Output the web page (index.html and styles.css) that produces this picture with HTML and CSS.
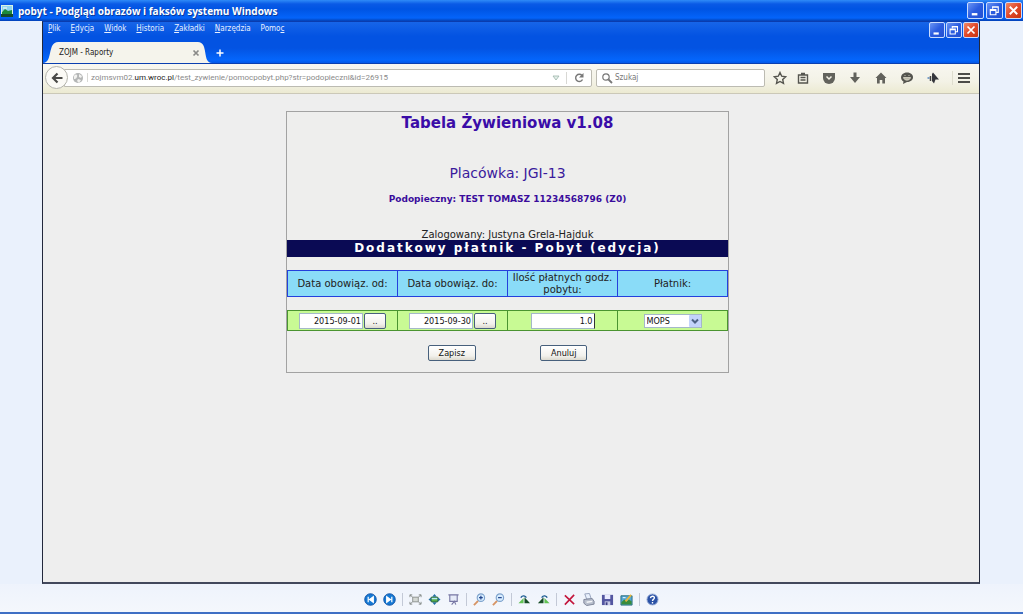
FILE: index.html
```html
<!DOCTYPE html>
<html lang="pl">
<head>
<meta charset="utf-8">
<title>pobyt - Podgląd obrazów i faksów systemu Windows</title>
<link rel="stylesheet" href="styles.css">
</head>
<body>
<header class="titlebar">
  <svg class="app-icon" viewBox="0 0 12 12"><rect width="12" height="12" fill="#d8f4e4"/><rect x="1" y="1" width="10" height="5" fill="#8fd4ee"/><path d="M1 7 4 4l3 2 4-1v4H1z" fill="#1c8a3c"/><path d="M0 9h12v3H0z" fill="#174a2c"/><path d="M2 3h4" stroke="#fff"/></svg>
  <h1 class="window-title">pobyt - Podgląd obrazów i faksów systemu Windows</h1>
  <div class="window-buttons window-buttons-outer">
    <button class="win" aria-label="Minimalizuj"><svg viewBox="0 0 16 16"><path d="M4 12h6" stroke="#fff" stroke-width="2.5"/></svg></button>
    <button class="win" aria-label="Przywróć"><svg viewBox="0 0 16 16"><path d="M6 6V4h6v6h-2M6 4.5h6M3.500 7h6v5.500h-6zM3.500 7.800h6" fill="none" stroke="#fff" stroke-width="1.200"/></svg></button>
    <button class="win close" aria-label="Zamknij"><svg viewBox="0 0 16 16"><path d="m4 4 8 8m0-8-8 8" stroke="#fff" stroke-width="2"/></svg></button>
  </div>
</header>

<main class="stage">
  <section class="browser">
    <div class="browser-top">
      <div class="menu-row">
        <nav class="menu">
          <button><u>P</u>lik</button><button><u>E</u>dycja</button><button><u>W</u>idok</button><button><u>H</u>istoria</button><button><u>Z</u>akładki</button><button><u>N</u>arzędzia</button><button>Pomo<u>c</u></button>
        </nav>
        <div class="window-buttons">
          <button class="win" aria-label="Minimalizuj przeglądarkę"><svg viewBox="0 0 16 16"><path d="M4 12h6" stroke="#fff" stroke-width="2.500"/></svg></button>
          <button class="win" aria-label="Przywróć przeglądarkę"><svg viewBox="0 0 16 16"><path d="M6 6V4h6v6h-2M6 4.500h6M3.500 7h6v5.500h-6zM3.500 7.800h6" fill="none" stroke="#fff" stroke-width="1.200"/></svg></button>
          <button class="win close" aria-label="Zamknij przeglądarkę"><svg viewBox="0 0 16 16"><path d="m4 4 8 8m0-8-8 8" stroke="#fff" stroke-width="2"/></svg></button>
        </div>
      </div>
      <div class="tabs">
        <div class="tab">
          <svg class="tab-shape" viewBox="0 0 167 21" preserveAspectRatio="none"><path d="M0 21C10 21 4 0 15 0H153C164 0 157 21 167 21z" fill="#f5f4ec"/></svg>
          <span class="tab-title">ZOJM - Raporty</span>
          <button class="tab-close" aria-label="Zamknij kartę"><svg viewBox="0 0 8 8"><path d="m1.500 1.500 5 5m0-5-5 5" stroke="#8a8a88" stroke-width="1.700"/></svg></button>
        </div>
        <button class="new-tab" aria-label="Nowa karta"><svg viewBox="0 0 8 8"><path d="M4 .5v7M.5 4h7" stroke="#fff" stroke-width="1.500"/></svg></button>
      </div>
    </div>

    <div class="navbar">
      <button class="back" aria-label="Wstecz"><svg viewBox="0 0 12 12"><path d="M6.500 1.500 2 6l4.500 4.500M2 6h9.500" fill="none" stroke="#4a4a48" stroke-width="2.200"/></svg></button>
      <div class="address">
        <svg class="globe" viewBox="0 0 12 12"><circle cx="6" cy="6" r="5" fill="#b4b6b6"/><path d="M2 4c2-3 4-1 3 1S3 7 2 7M7 2l3 2-1 2-2-1zM6 7l3 1-2 3-2-2z" fill="#f2f2f0"/></svg>
        <div class="url">zojmsvm02.<b>um.wroc.pl</b>/test_zywienie/pomocpobyt.php?str=podopieczni&amp;id=26915</div>
        <button class="history" aria-label="Historia adresów"><svg viewBox="0 0 8 8"><path d="M1 2h6L4 6z" fill="#e4f0ea" stroke="#9cb4aa" stroke-width=".8"/></svg></button>
        <button class="reload" aria-label="Odśwież"><svg viewBox="0 0 12 12"><path d="M9 3.500A3.600 3.600 0 1 0 9.500 7.500" fill="none" stroke="#777" stroke-width="1.400"/><path d="M10.500 1v4.500H6z" fill="#777"/></svg></button>
      </div>
      <div class="search">
        <svg class="lens" viewBox="0 0 12 12"><circle cx="5" cy="5" r="3.200" fill="none" stroke="#777" stroke-width="1.200"/><path d="m7.500 7.500 3.500 3.500" stroke="#777" stroke-width="1.800"/></svg>
        <input type="search" placeholder="Szukaj" aria-label="Szukaj">
      </div>
      <div class="tools">
        <button aria-label="Dodaj zakładkę"><svg viewBox="0 0 14 14"><path d="m7 1.500 1.700 3.700 4 .5-3 2.700.8 4L7 10.500l-3.500 1.900.8-4-3-2.700 4-.5z" fill="none" stroke="#55554f" stroke-width="1.400"/></svg></button>
        <button aria-label="Lista zakładek"><svg viewBox="0 0 14 14"><path d="M2.500 4h9v8h-9zM4.500 6.500h5M4.500 9h5M5 2.500h4" fill="none" stroke="#55554f" stroke-width="1.400"/></svg></button>
        <button aria-label="Pocket"><svg viewBox="0 0 14 14"><path d="M1 2h12v5a6 6 0 0 1-12 0z" fill="#62625c"/><path d="m4.500 5.500 2.500 2.500 2.500-2.500" fill="none" stroke="#f4f2e6" stroke-width="1.500"/></svg></button>
        <button aria-label="Pobrane"><svg viewBox="0 0 14 14"><path d="M5.500 1.500h3V6H12l-5 6-5-6h3.500z" fill="#62625c"/></svg></button>
        <button aria-label="Strona startowa"><svg viewBox="0 0 14 14"><path d="M7 1.500 12.500 7h-1.500v5.500H8.300V9H5.700v3.500H3V7H1.500z" fill="#62625c"/></svg></button>
        <button aria-label="Czat"><svg viewBox="0 0 14 14"><path d="M7 1.500c8 0 8 9.500 0 9.500L3 13l.5-2.500C-1 8 1 1.500 7 1.500z" fill="#55554f"/><path d="M3.500 6.500h7C10 10 4 10 3.500 6.500zM4.500 4.500h1M8.500 4.500h1" fill="#bbb9a8" stroke="#dddbcb" stroke-width=".8"/></svg></button>
        <button aria-label="Dodatek"><svg viewBox="0 0 14 14"><path d="M7 1.500 13 8.500H9.500L8 12.500 6 10V3z" fill="#35363c"/><path d="M1.500 7h2" stroke="#7ca0c8" stroke-width="2"/><path d="M4.500 5v5" stroke="#444" stroke-width="1.500"/></svg></button>
        <button class="hamburger" aria-label="Menu"><svg viewBox="0 0 14 14"><path d="M1 3h12M1 7h12M1 11h12" stroke="#4c4c48" stroke-width="2"/></svg></button>
      </div>
    </div>

    <div class="page">
      <form class="panel">
        <h2 class="app-name">Tabela Żywieniowa v1.08</h2>
        <p class="facility">Placówka: JGI-13</p>
        <p class="person">Podopieczny: TEST TOMASZ 11234568796 (Z0)</p>
        <p class="user">Zalogowany: Justyna Grela-Hajduk</p>
        <h3 class="section-title">Dodatkowy płatnik - Pobyt (edycja)</h3>
        <table class="payer">
          <thead>
            <tr><th id="from">Data obowiąz. od:</th><th id="to">Data obowiąz. do:</th><th id="hours">Ilość płatnych godz. pobytu:</th><th id="who">Płatnik:</th></tr>
          </thead>
          <tbody>
            <tr>
              <td><div class="field"><input type="text" value="2015-09-01" aria-labelledby="from"><button type="button" class="xp">..</button></div></td>
              <td><div class="field"><input type="text" value="2015-09-30" aria-labelledby="to"><button type="button" class="xp">..</button></div></td>
              <td><div class="field"><input type="text" class="caret" value="1.0" aria-labelledby="hours"></div></td>
              <td><div class="field"><div class="picker"><select aria-labelledby="who"><option>MOPS</option></select><svg class="arrow" viewBox="0 0 12 12"><rect width="12" height="12" rx="1" fill="#c3d3fb"/><path d="m3 4.500 3 3 3-3" fill="none" stroke="#4d6185" stroke-width="2"/></svg></div></div></td>
            </tr>
          </tbody>
        </table>
        <div class="actions"><button type="button" class="xp">Zapisz</button><button type="button" class="xp">Anuluj</button></div>
      </form>
    </div>
  </section>
</main>

<footer class="viewer-tools">
  <div class="group">
    <button aria-label="Poprzedni obraz"><svg viewBox="0 0 14 14"><circle cx="7" cy="7" r="6.200" fill="#1579d4" stroke="#0d50a4"/><path d="M4.500 4v6M10 4 6 7l4 3z" fill="#fff" stroke="#fff" stroke-width="1.300"/></svg></button>
    <button aria-label="Następny obraz"><svg viewBox="0 0 14 14"><circle cx="7" cy="7" r="6.200" fill="#1579d4" stroke="#0d50a4"/><path d="M9.500 4v6M4 4l4 3-4 3z" fill="#fff" stroke="#fff" stroke-width="1.300"/></svg></button>
  </div>
  <div class="group">
    <button aria-label="Dopasuj"><svg viewBox="0 0 14 14"><path d="M4 4.500h6v5H4z" fill="#d4d8d4" stroke="#8c918e"/><path d="M1 4.500V2h2.500M10.500 2H13v2.500M13 9.500V12h-2.500M3.500 12H1V9.500M1 2l3 2.500M13 2l-3 2.500M1 12l3-2.500M13 12l-3-2.500" fill="none" stroke="#858a88"/></svg></button>
    <button aria-label="Rozmiar rzeczywisty"><svg viewBox="0 0 14 14"><path d="m7 1 2.500 3h-5zM7 13l2.500-3h-5zM.5 7l3-2.500v5zM13.500 7l-3-2.500v5z" fill="#2471a8"/><path d="M3.500 4.500h7v5h-7z" fill="#57b04b" stroke="#24643c"/><path d="M4 6h6" stroke="#b7e9f5" stroke-width="1.500"/></svg></button>
    <button aria-label="Pokaz slajdów"><svg viewBox="0 0 14 14"><path d="M1.500 2h11M3 2v7h8V2" fill="#e6ebf8" stroke="#7777a4" stroke-width="1.200"/><path d="M5 12.500 8 9l1.500 3.500" fill="none" stroke="#7777a4" stroke-width="1.200"/></svg></button>
  </div>
  <div class="group">
    <button aria-label="Powiększ"><svg viewBox="0 0 14 14"><path d="M1 13 5.500 8.500" stroke="#d79464" stroke-width="2"/><circle cx="8.500" cy="5" r="4" fill="#d8edff" stroke="#7da2cc" stroke-width="1.200"/><path d="M6.500 5h4M8.500 3v4" stroke="#23458c" stroke-width="1.300"/></svg></button>
    <button aria-label="Pomniejsz"><svg viewBox="0 0 14 14"><path d="M1 13 5.500 8.500" stroke="#d79464" stroke-width="2"/><circle cx="8.500" cy="5" r="4" fill="#d8edff" stroke="#7da2cc" stroke-width="1.200"/><path d="M6.500 5h4" stroke="#23458c" stroke-width="1.300"/></svg></button>
  </div>
  <div class="group">
    <button aria-label="Obróć w prawo"><svg viewBox="0 0 14 14"><path d="M.5 11 6 5.500V11z" fill="#62c254"/><path d="M7 11V4.500L13 11z" fill="#164b25"/><path d="M3 5c2-3 5-2 6 0" fill="none" stroke="#1c5c93" stroke-width="1.500"/></svg></button>
    <button aria-label="Obróć w lewo"><svg viewBox="0 0 14 14"><path d="m1 11 6-6.500V11z" fill="#164b25"/><path d="M8 11V5.500l5.500 5.500z" fill="#62c254"/><path d="M5 5c2-3 5-2 6 0" fill="none" stroke="#1c5c93" stroke-width="1.500"/></svg></button>
  </div>
  <div class="group">
    <button aria-label="Usuń"><svg viewBox="0 0 14 14"><path d="m2 2.500 10 9.500M12 2 2 12.500" stroke="#c3163c" stroke-width="1.700"/></svg></button>
    <button aria-label="Drukuj"><svg viewBox="0 0 14 14"><path d="m3 1 5-.5 2 6H5z" fill="#e8f0fc" stroke="#94a0ba"/><path d="m2 7 9-1 2 3v3l-8 1.500L2 11z" fill="#b8bfcd" stroke="#7a8296"/><path d="m5 10 6-1" stroke="#f5f7fa" stroke-width="1.500"/></svg></button>
    <button aria-label="Kopiuj do"><svg viewBox="0 0 14 14"><path d="M1 2h12v11H1z" fill="#5356a0"/><path d="M4 2h6v4.500H4z" fill="#e9ebff"/><path d="M4 9h6v4H4z" fill="#c9cbe6"/><path d="M5 10h2v3H5z" fill="#3c3e84"/></svg></button>
    <button aria-label="Edytuj"><svg viewBox="0 0 14 14"><path d="M1 3h12v10H1z" fill="#54a8d8" stroke="#266b7c"/><path d="m1.500 10 3-3 3 2 2-2 3 2v3.500h-11z" fill="#398c3b"/><path d="m6 9 6-7" stroke="#e8b63c" stroke-width="2"/><path d="M3 5h3" stroke="#fff"/></svg></button>
  </div>
  <div class="group">
    <button aria-label="Pomoc"><svg viewBox="0 0 14 14"><circle cx="7" cy="7" r="6" fill="#2b52a6" stroke="#a4b7dc"/><path d="M4.800 5.500C5 2.500 9.500 3 9 5.500 8.500 7 7 6.800 7 8.500M7 9.800v1.500" fill="none" stroke="#fff" stroke-width="1.500"/></svg></button>
  </div>
</footer>
</body>
</html>
```
FILE: styles.css
```css
* { box-sizing: border-box; }

body {
  margin: 0;
  min-height: 100vh;
  display: flex;
  flex-direction: column;
  background: #eaf1fc;
  color: #222;
  font-family: "DejaVu Sans Condensed", "DejaVu Sans", sans-serif;
  font-size: 8px;
}

button {
  margin: 0;
  padding: 0;
  border: 0;
  background: none;
  color: inherit;
  font: inherit;
}

svg { display: block; }
h1, h2, h3, p { margin: 0; }

.titlebar {
  display: flex;
  align-items: center;
  height: 21px;
  padding: 0 1px;
  background: linear-gradient(#2f8bf8 0, #0a5ae6 4px, #0054e3 9px, #0464fa 18px, #0340b4 21px);
}

.app-icon { width: 12px; height: 12px; }

.window-title {
  flex: 1;
  padding-left: 5px;
  color: #fff;
  font-family: "Open Sans", sans-serif;
  font-size: 10px;
  line-height: 16px;
  font-weight: 700;
  text-shadow: 1px 1px #0a3a9c;
}

.window-buttons { display: flex; gap: 1px; }
.window-buttons-outer { gap: 2px; }

.win {
  width: 16px;
  height: 16px;
  border: 1px solid #c9dcff;
  border-radius: 2px;
  background: linear-gradient(135deg, #6a94f4, #2a5ce0 50%, #2350d0);
}
.window-buttons-outer .win { width: 17px; height: 17px; }
.win.close { background: linear-gradient(135deg, #f08a68, #e0492a 50%, #c83410); }

.stage {
  flex: 1;
  display: flex;
  padding: 0 43px 0 42px;
}

.browser {
  flex: 1;
  display: flex;
  flex-direction: column;
  border: 1px solid #22283c;
  border-top-color: #0a3cae;
  border-bottom-width: 2px;
  border-bottom-color: #42485c;
}

.browser-top {
  background: linear-gradient(#1765e8, #0353e2 14px, #0353e2 26px, #0466fc 38px, #0358e8);
  border-bottom: 1px solid #0a3fb0;
}

.menu-row {
  display: flex;
  justify-content: space-between;
  height: 20px;
}

.menu {
  display: flex;
  align-items: flex-start;
  gap: 10px;
  padding: 1px 5px;
  color: #e8f0ff;
  line-height: 12px;
}

.tabs {
  display: flex;
  align-items: center;
  gap: 4px;
  height: 21px;
}

.tab {
  position: relative;
  display: flex;
  align-items: center;
  justify-content: space-between;
  width: 169px;
  height: 21px;
  padding: 0 12px 0 16px;
}
.tab-shape { position: absolute; inset: 0; width: 100%; height: 100%; }
.tab-title, .tab-close { position: relative; }
.tab-close svg, .new-tab svg { width: 8px; height: 8px; }

.navbar {
  display: flex;
  align-items: center;
  height: 30px;
  padding: 0 4px 2px 2px;
  border-bottom: 1px solid #cbc8b8;
  background: linear-gradient(#f8f7f1, #f3f2e6 60%, #ecead2);
}

.back {
  position: relative;
  z-index: 1;
  display: grid;
  place-items: center;
  width: 23px;
  height: 23px;
  border: 1px solid #b4b4ac;
  border-radius: 50%;
  background: #fbfaf6;
}
.back svg { width: 12px; height: 12px; }

.address, .search {
  display: flex;
  align-items: center;
  height: 18px;
  border: 1px solid #bcbbb2;
  background: #fff;
}
.address {
  flex: 1;
  margin-left: -4px;
  padding-left: 7px;
  border-radius: 0 2px 2px 0;
  color: #8a8a8a;
}
.globe { width: 12px; height: 12px; }
.url {
  flex: 1;
  margin-left: 3px;
  padding-left: 3px;
  border-left: 1px solid #d8d8d4;
  font-family: Roboto, sans-serif;
}
.url b { color: #222; font-weight: 400; }
.history { padding: 0 6px; }
.history svg { width: 8px; height: 8px; }
.reload { padding: 0 6px; border-left: 1px solid #d8d8d4; }
.reload svg, .lens { width: 12px; height: 12px; }

.search {
  width: 169px;
  margin-left: 4px;
  padding: 0 4px;
  gap: 2px;
  border-radius: 2px;
}
.search input {
  flex: 1;
  min-width: 0;
  padding: 0;
  border: 0;
  outline: 0;
  background: none;
  font: inherit;
}
.search input::placeholder { color: #777; }

.tools {
  display: flex;
  gap: 12px;
  padding-left: 8px;
}
.tools svg { width: 14px; height: 14px; }
.tools button:first-child { margin-right: -3px; }
.tools .hamburger { padding: 0 4px; border-left: 1px solid #deddce; }

.page {
  flex: 1;
  display: flex;
  align-items: flex-start;
  justify-content: center;
  padding: 17px 7px 0 0;
  background: #eee;
}

.panel {
  width: 443px;
  padding-bottom: 11px;
  border: 1px solid #a2a2a2;
  background: #eeeeed;
  font-family: "DejaVu Sans", sans-serif;
  text-align: center;
}

.app-name {
  color: #3a0ca8;
  font-size: 15px;
  line-height: 22px;
}
.facility {
  margin-top: 29px;
  color: #3a1a9c;
  font-size: 14px;
  line-height: 20px;
}
.person {
  margin-top: 8px;
  color: #3a0c9c;
  font-size: 9px;
  font-weight: 700;
  line-height: 16px;
}
.user {
  margin-top: 23px;
  font-size: 10px;
  line-height: 10px;
}
.section-title {
  background: #0a0a54;
  color: #fff;
  font-size: 12px;
  line-height: 17px;
  letter-spacing: 2px;
}

.payer {
  width: 100%;
  margin-top: 13px;
  border-collapse: collapse;
  table-layout: fixed;
}
.payer th {
  height: 26px;
  padding: 0;
  border: 1px solid #2440dc;
  background: #8adcf8;
  font-size: 10px;
  font-weight: 400;
  line-height: 12px;
}
.payer tbody::before { content: ""; display: block; height: 13px; }
.payer td {
  height: 20px;
  padding: 0;
  border: 1px solid #4a9430;
  background: #c8fa94;
}

.field {
  display: flex;
  justify-content: center;
  align-items: center;
  gap: 1px;
}
.field input, .field select {
  height: 16px;
  border: 1px solid #a4b8c8;
  background: #fff;
  color: #111;
  font-family: "DejaVu Sans Condensed", "DejaVu Sans", sans-serif;
  font-size: 9px;
}
.field input { width: 64px; padding: 0 1px; text-align: right; }
.field .caret { border-right-color: #333; }
.field .xp { width: 22px; padding: 0; }

.picker { position: relative; }
.field select { width: 58px; height: 14px; padding: 0 2px; appearance: none; }
.arrow { position: absolute; top: 1px; right: 1px; width: 12px; height: 12px; pointer-events: none; }

.xp {
  height: 16px;
  padding: 0 10px;
  border: 1px solid #47607c;
  border-radius: 2px;
  background: linear-gradient(#fff, #f2f1ec 70%, #dcd9ce);
  color: #111;
  font-family: "DejaVu Sans Condensed", "DejaVu Sans", sans-serif;
  font-size: 9px;
  line-height: 12px;
}

.actions {
  display: flex;
  justify-content: center;
  gap: 64px;
  margin-top: 14px;
}

.viewer-tools {
  display: flex;
  justify-content: center;
  align-items: center;
  height: 30px;
  padding-top: 2px;
  border-bottom: 2px solid #3f6fc4;
  background: linear-gradient(#eef3fc, #f4f7fc);
}
.group {
  display: flex;
  gap: 6px;
  padding: 0 6px;
  border-right: 1px solid #c3c9d6;
}
.group:last-child { border-right: 0; }
.group svg { width: 13px; height: 13px; }
```
